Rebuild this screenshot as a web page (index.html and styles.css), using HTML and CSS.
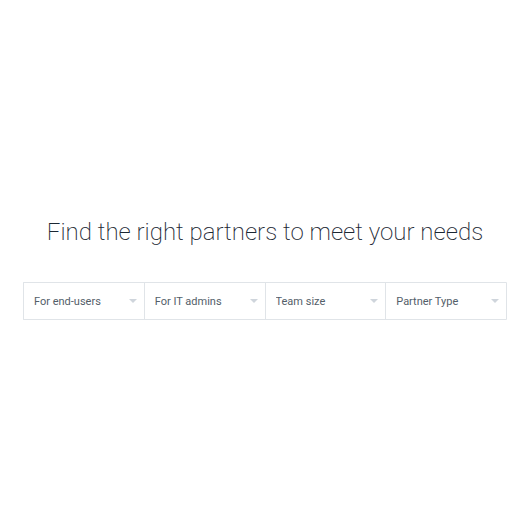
FILE: index.html
```html
<!DOCTYPE html>
<html lang="en">

<head>
    <meta charset="UTF-8">
    <meta name="viewport" content="width=device-width, initial-scale=1.0">
    <title>Find a partner</title>
    <link rel="stylesheet" href="styles.css">
</head>

<body>
    <main class="partners">
        <h1 class="partners-title">Find the right partners to meet your needs</h1>
        <form class="filters">
            <div class="filter">
                <select id="endUsers" aria-label="For end-users">
                    <option>For end-users</option>
                </select>
            </div>
            <div class="filter">
                <select id="itAdmins" aria-label="For IT admins">
                    <option>For IT admins</option>
                </select>
            </div>
            <div class="filter">
                <select id="teamSize" aria-label="Team size">
                    <option>Team size</option>
                </select>
            </div>
            <div class="filter">
                <select id="partnerType" aria-label="Partner Type">
                    <option>Partner Type</option>
                </select>
            </div>
        </form>
    </main>
</body>

</html>
```
FILE: styles.css
```css
* {
    box-sizing: border-box;
    margin: 0;
    padding: 0;
}

body {
    font-family: Roboto, "Liberation Sans", sans-serif;
    background-color: #fff;
    color: #535e69;
}

.partners {
    padding: 216px 13px 0 23px;
}

.partners-title {
    font-size: 24px;
    font-weight: 200;
    line-height: 32px;
    text-align: center;
    color: #1b2733;
}

.filters {
    display: flex;
    margin-top: 34px;
    border: 1px solid #e0e4e8;
    border-right: none;
    border-radius: 1px;
}

.filter {
    position: relative;
    flex: 1;
    border-right: 1px solid #e0e4e8;
}

/* dropdown arrow */
.filter::after {
    content: "";
    position: absolute;
    top: 16px;
    right: 7px;
    border: 4px solid transparent;
    border-top-color: #cfd5dc;
    border-bottom: none;
    pointer-events: none;
}

.filter select {
    display: block;
    width: 100%;
    height: 36px;
    padding: 0 20px 0 10px;
    font-family: inherit;
    font-size: 11px;
    color: #535e69;
    background-color: transparent;
    border: none;
    border-radius: 0;
    appearance: none;
    cursor: pointer;
}
```
